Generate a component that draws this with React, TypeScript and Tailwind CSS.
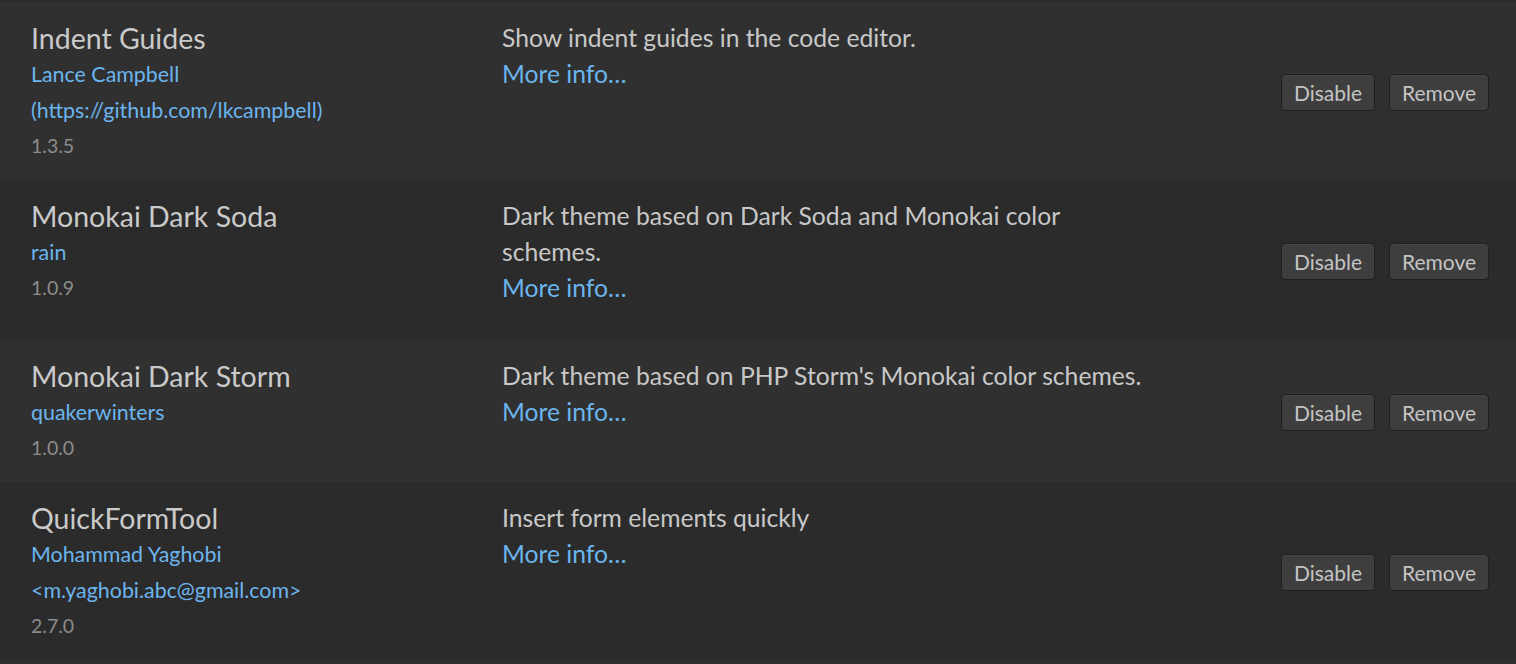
import React from "react";

type Ext = {
  title: string;
  authors: string[];
  version: string;
  desc: string;
  bg: string;
  h: string;
};

const exts: Ext[] = [
  {
    title: "Indent Guides",
    authors: ["Lance Campbell", "(https://github.com/lkcampbell)"],
    version: "1.3.5",
    desc: "Show indent guides in the code editor.",
    bg: "bg-[#303030]",
    h: "h-[178px]",
  },
  {
    title: "Monokai Dark Soda",
    authors: ["rain"],
    version: "1.0.9",
    desc: "Dark theme based on Dark Soda and Monokai color schemes.",
    bg: "bg-[#2b2b2b]",
    h: "h-[160px]",
  },
  {
    title: "Monokai Dark Storm",
    authors: ["quakerwinters"],
    version: "1.0.0",
    desc: "Dark theme based on PHP Storm's Monokai color schemes.",
    bg: "bg-[#303030]",
    h: "h-[142px]",
  },
  {
    title: "QuickFormTool",
    authors: ["Mohammad Yaghobi", "<m.yaghobi.abc@gmail.com>"],
    version: "2.7.0",
    desc: "Insert form elements quickly",
    bg: "bg-[#2b2b2b]",
    h: "h-[178px]",
  },
];

function Btn({ label, w }: { label: string; w: string }) {
  return (
    <button
      className={`${w} h-[37px] rounded-[4px] border border-[#1f1f1f] bg-[#3e3e3e] text-[21px] leading-none text-[#c4c4c4] shadow-[inset_0_1px_0_rgba(255,255,255,0.04)]`}
    >
      {label}
    </button>
  );
}

export default function App() {
  return (
    <div
      className="w-[1516px] h-[664px] overflow-hidden bg-[#303030]"
      style={{ fontFamily: "Lato, 'Open Sans', sans-serif" }}
    >
      <div className="h-[2px] bg-[#2b2b2b]" />
      {exts.map((e) => (
        <div key={e.title} className={`flex items-center ${e.bg} ${e.h} pl-[31px] pr-[27px]`}>
          <div className="flex self-stretch pt-[18px] flex-1">
            <div className="w-[471px] shrink-0">
              <div className="text-[28.5px] leading-[36px] text-[#cacaca]">{e.title}</div>
              {e.authors.map((a) => (
                <div key={a} className="text-[21.4px] leading-[36px] text-[#6bb5ee]">
                  {a}
                </div>
              ))}
              <div className="text-[19.5px] leading-[36px] text-[#8c8c8c]">{e.version}</div>
            </div>
            <div className="w-[652px]">
              <div className="text-[24.7px] leading-[36px] text-[#c8c8c8]">{e.desc}</div>
              <div className="text-[24.7px] leading-[36px] text-[#6bb5ee]">More info…</div>
            </div>
          </div>
          <div className="flex gap-[14px] translate-y-[1px]">
            <Btn label="Disable" w="w-[94px]" />
            <Btn label="Remove" w="w-[100px]" />
          </div>
        </div>
      ))}
    </div>
  );
}
